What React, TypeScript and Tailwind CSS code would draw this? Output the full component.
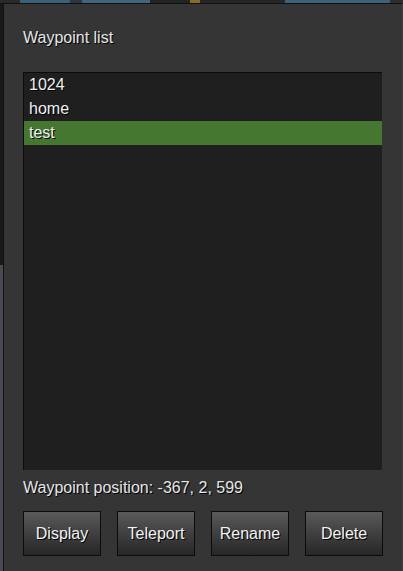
const waypoints = ["1024", "home", "test"];
const buttons = ["Display", "Teleport", "Rename", "Delete"];

export default function App() {
  const selected = 2;

  return (
    <div className="w-[403px] h-[571px] overflow-hidden bg-[#1b1b1b] flex flex-col font-['Liberation_Sans',Arial,sans-serif]">
      {/* game scene peeking above the panel */}
      <div className="h-[3px] flex shrink-0">
        <div className="w-[20px] bg-[#2a2a2a]" />
        <div className="w-[50px] bg-[#3d6079]" />
        <div className="w-[12px] bg-[#2b3640]" />
        <div className="w-[68px] bg-[#41657e]" />
        <div className="w-[40px] bg-[#232323]" />
        <div className="w-[10px] bg-[#8a6a2a]" />
        <div className="w-[85px] bg-[#262626]" />
        <div className="w-[105px] bg-[#3f627b]" />
        <div className="flex-1 bg-[#2e2e2e]" />
      </div>

      <div className="flex flex-1">
        <div className="w-[3px] flex flex-col">
          <div className="h-[262px] bg-[#181818]" />
          <div className="flex-1 bg-[#474a55]" />
        </div>

        <div className="flex-1 bg-[#353535] border-t border-l border-[#111] border-r border-r-[#3e3e3e] flex flex-col pl-[19px] pr-[19px]">
          <div className="pt-[25px] h-[68px] text-[16px] leading-[18px] text-[#e6e6e6] [text-shadow:1px_1px_0_#000]">
            Waypoint list
          </div>

          <div className="w-[359px] h-[398px] bg-[#1f1f1f] border-t border-l border-[#0b0b0b] flex flex-col">
            {waypoints.map((name, i) => (
              <div
                key={name}
                className={
                  i === selected
                    ? "h-[24px] pl-[5px] flex items-center text-[16px] text-[#f0f0f0] bg-[#467731] [text-shadow:1px_1px_0_#000]"
                    : "h-[24px] pl-[5px] flex items-center text-[16px] text-[#f0f0f0] [text-shadow:1px_1px_0_#000]"
                }
              >
                {name}
              </div>
            ))}
          </div>

          <div className="mt-[7px] h-[22px] flex items-center text-[16px] text-[#e6e6e6] [text-shadow:1px_1px_0_#000]">
            Waypoint position: -367, 2, 599
          </div>

          <div className="mt-[12px] flex gap-[16px]">
            {buttons.map((label) => (
              <button
                key={label}
                className="w-[78px] h-[45px] border border-[#0c0c0c] bg-gradient-to-b from-[#5a5a5a] to-[#272727] text-[16px] text-[#f2f2f2] [text-shadow:1px_1px_0_#000] flex items-center justify-center"
              >
                {label}
              </button>
            ))}
          </div>
        </div>
      </div>
    </div>
  );
}
